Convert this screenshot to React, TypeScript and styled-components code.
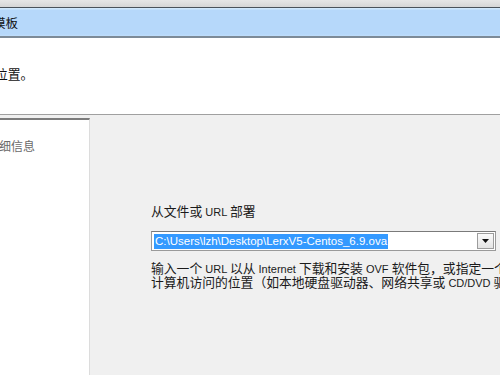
import React from "react";
import styled, { createGlobalStyle } from "styled-components";

const Global = createGlobalStyle`
  html, body { margin: 0; padding: 0; background: #f0f0f0; }
  #root { width: 500px; height: 375px; }
`;

const Window = styled.div`
  width: 500px;
  height: 375px;
  overflow: hidden;
  display: flex;
  flex-direction: column;
  font-family: "Liberation Sans", "Noto Sans CJK SC", sans-serif;
  font-size: 12.8px;
  color: #1a1a1a;
  background: #f0f0f0;
`;

const Latin = styled.span`
  font-size: 11px;
`;

const TopStrip = styled.div`
  height: 7px;
  background: linear-gradient(#e6e6e6, #d6d6d6);
  border-bottom: 1px solid #4a525a;
  flex: none;
`;

const TitleBar = styled.div`
  height: 28px;
  flex: none;
  display: flex;
  align-items: center;
  background: linear-gradient(#cfe7fc 0, #cfe7fc 1px, #b6d8fa 2px, #b6d8fa 26px, #c0defb 28px);
  border-bottom: 2px solid #7d8b98;
`;

const TitleText = styled.span`
  margin-left: -7px;
  font-size: 12.5px;
  white-space: nowrap;
  color: #111;
`;

const Intro = styled.div`
  height: 77px;
  flex: none;
  background: #ffffff;
  border-bottom: 1px solid #a0a0a0;
  padding-top: 29px;
  box-sizing: border-box;
`;

const IntroText = styled.div`
  margin-left: -5px;
  white-space: nowrap;
  line-height: 16px;
  color: #111;
`;

const Body = styled.div`
  flex: 1;
  display: flex;
  background: #f0f0f0;
`;

const SidePanel = styled.div`
  width: 90px;
  flex: none;
  margin-top: 3px;
  background: #ffffff;
  border-top: 2px solid #7c7c7c;
  border-right: 1px solid #dcdcdc;
  padding-top: 19px;
  box-sizing: border-box;
`;

const SideItem = styled.div`
  margin-left: -13px;
  white-space: nowrap;
  color: #6a6a6a;
  font-size: 12px;
  line-height: 16px;
`;

const Content = styled.div`
  flex: none;
  width: 420px;
  padding: 89px 0 0 61px;
  display: flex;
  flex-direction: column;
`;

const Label = styled.div`
  white-space: nowrap;
  line-height: 16px;
  color: #1a1a1a;
`;

const Combo = styled.div`
  margin-top: 11px;
  width: 345px;
  height: 20px;
  box-sizing: border-box;
  display: flex;
  align-items: center;
  background: #ffffff;
  border: 1px solid #9a9a9a;
  border-top-color: #7a7a7a;
  padding: 0 1px 0 2px;
`;

const Selected = styled.span`
  background: #3399ff;
  color: #ffffff;
  white-space: nowrap;
  font-size: 11.5px;
  line-height: 15px;
  padding: 0 1px;
`;

const Spacer = styled.span`
  flex: 1;
`;

const DropButton = styled.span`
  width: 17px;
  height: 16px;
  box-sizing: border-box;
  display: flex;
  align-items: center;
  justify-content: center;
  background: linear-gradient(#fbfbfb, #e4e4e4);
  border: 1px solid #9c9c9c;
`;

const Hint = styled.div`
  margin-top: 11px;
  white-space: nowrap;
  line-height: 13px;
  color: #1a1a1a;
`;

export default function App() {
  return (
    <>
      <Global />
      <Window>
        <TopStrip />
        <TitleBar>
          <TitleText>模板</TitleText>
        </TitleBar>
        <Intro>
          <IntroText>位置。</IntroText>
        </Intro>
        <Body>
          <SidePanel>
            <SideItem>详细信息</SideItem>
          </SidePanel>
          <Content>
            <Label>
              从文件或<Latin> URL </Latin>部署
            </Label>
            <Combo>
              <Selected>C:\Users\lzh\Desktop\LerxV5-Centos_6.9.ova</Selected>
              <Spacer />
              <DropButton>
                <svg width="7" height="4" viewBox="0 0 7 4">
                  <path d="M0 0 H7 L3.5 4 Z" fill="#111" />
                </svg>
              </DropButton>
            </Combo>
            <Hint>
              输入一个<Latin> URL </Latin>以从<Latin> Internet </Latin>下载和安装
              <Latin> OVF </Latin>软件包，或指定一个用户可从
              <br />
              计算机访问的位置（如本地硬盘驱动器、网络共享或<Latin> CD/DVD </Latin>驱动器）。
            </Hint>
          </Content>
        </Body>
      </Window>
    </>
  );
}
